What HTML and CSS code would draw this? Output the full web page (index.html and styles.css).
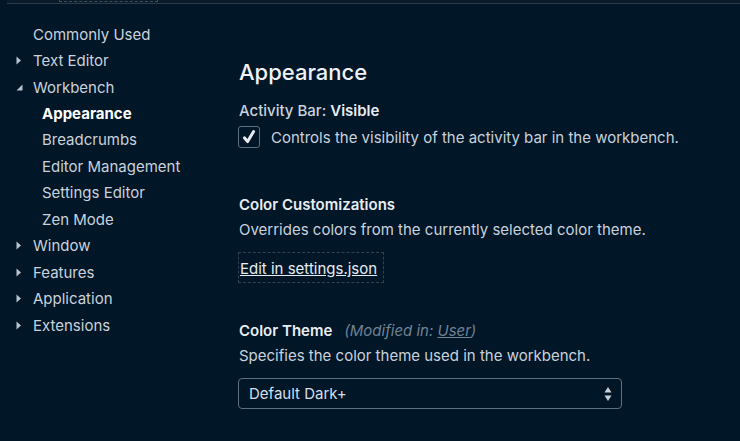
FILE: index.html
```html
<!DOCTYPE html>
<html lang="en">
<head>
<meta charset="utf-8">
<title>Settings</title>
<link rel="stylesheet" href="styles.css">
</head>
<body>
<div class="topbar"><div class="search-focus"></div></div>
<div class="main">
  <nav class="toc">
    <div class="row l1"><span class="twist"></span>Commonly Used</div>
    <div class="row l1"><span class="twist"><svg width="6" height="9" viewBox="0 0 6 9"><path d="M0.5 0.5 L5 4.5 L0.5 8.5 Z" fill="#b8c2cc"/></svg></span>Text Editor</div>
    <div class="row l1"><span class="twist"><svg width="7" height="7" viewBox="0 0 7 7"><path d="M6.5 0.5 L6.5 6.5 L0.5 6.5 Z" fill="#b8c2cc"/></svg></span>Workbench</div>
    <div class="row l2 active">Appearance</div>
    <div class="row l2">Breadcrumbs</div>
    <div class="row l2">Editor Management</div>
    <div class="row l2">Settings Editor</div>
    <div class="row l2">Zen Mode</div>
    <div class="row l1"><span class="twist"><svg width="6" height="9" viewBox="0 0 6 9"><path d="M0.5 0.5 L5 4.5 L0.5 8.5 Z" fill="#b8c2cc"/></svg></span>Window</div>
    <div class="row l1"><span class="twist"><svg width="6" height="9" viewBox="0 0 6 9"><path d="M0.5 0.5 L5 4.5 L0.5 8.5 Z" fill="#b8c2cc"/></svg></span>Features</div>
    <div class="row l1"><span class="twist"><svg width="6" height="9" viewBox="0 0 6 9"><path d="M0.5 0.5 L5 4.5 L0.5 8.5 Z" fill="#b8c2cc"/></svg></span>Application</div>
    <div class="row l1"><span class="twist"><svg width="6" height="9" viewBox="0 0 6 9"><path d="M0.5 0.5 L5 4.5 L0.5 8.5 Z" fill="#b8c2cc"/></svg></span>Extensions</div>
  </nav>
  <section class="content">
    <h1 class="group-title">Appearance</h1>

    <div class="setting first">
      <div class="title"><span class="cat">Activity Bar: </span><b>Visible</b></div>
      <div class="check-row">
        <span class="checkbox"><svg width="16" height="16" viewBox="0 0 16 16"><path d="M3.4 8.8 L6.6 12.6 L12.6 2.6" fill="none" stroke="#e6ebf2" stroke-width="3" stroke-linecap="round" stroke-linejoin="round"/></svg></span>
        <span class="desc">Controls the visibility of the activity bar in the workbench.</span>
      </div>
    </div>

    <div class="setting">
      <div class="title"><b>Color Customizations</b></div>
      <div class="desc line">Overrides colors from the currently selected color theme.</div>
      <div class="edit-link"><span>Edit in settings.json</span></div>
    </div>

    <div class="setting last">
      <div class="title"><b>Color Theme</b><span class="modified">(Modified in: <u>User</u>)</span></div>
      <div class="desc line">Specifies the color theme used in the workbench.</div>
      <div class="select">
        <span>Default Dark+</span>
        <svg class="arrows" width="8" height="16" viewBox="0 0 8 16"><path d="M4 1 L7.5 6.5 L0.5 6.5 Z" fill="#c8d0d8"/><path d="M4 15 L7.5 9.5 L0.5 9.5 Z" fill="#c8d0d8"/></svg>
      </div>
    </div>
  </section>
</div>
</body>
</html>
```
FILE: styles.css
```css
* { box-sizing: border-box; }
html, body { margin: 0; padding: 0; }
body {
  background: #011627;
  color: #d6deeb;
  font-family: Inter, "Noto Sans", sans-serif;
  font-size: 15px;
  width: 740px;
  height: 441px;
  overflow: hidden;
}
.topbar {
  height: 4px;
  margin-left: 7px;
  border-bottom: 1px solid #2a3c4b;
  background: #0a1b29;
  position: relative;
}
.search-focus {
  position: absolute;
  left: 52px;
  top: -3px;
  width: 99px;
  height: 5px;
  border: 1px dashed #3a5060;
  border-top: none;
}
.main {
  display: flex;
}
.toc {
  width: 239px;
  flex: none;
  padding-top: 17px;
}
.row {
  height: 26.45px;
  display: flex;
  align-items: center;
  color: #c9d2dc;
  white-space: nowrap;
}
.row.l1 { padding-left: 16px; }
.row.l2 { padding-left: 42px; }
.row.active { color: #ffffff; font-weight: 700; }
.twist {
  width: 17px;
  flex: none;
  display: flex;
  align-items: center;
}
.content {
  flex: 1;
  padding-top: 54px;
}
.group-title {
  margin: 0;
  font-size: 22px;
  font-weight: 500;
  line-height: 28px;
  color: #eef2f7;
}
.setting { padding-top: 47px; }
.setting.first { padding-top: 15px; }
.setting.last { padding-top: 38px; }
.title {
  line-height: 20px;
  height: 20px;
  white-space: nowrap;
}
.title b { font-weight: 600; color: #e8edf3; }
.cat { color: #c9d2dc; font-weight: 500; }
.modified {
  font-style: italic;
  color: #6f8394;
  margin-left: 12px;
}
.modified u { text-decoration-color: #6f8394; }
.check-row {
  margin-top: 5px;
  display: flex;
  align-items: center;
  height: 22px;
}
.checkbox {
  width: 22px;
  height: 22px;
  margin-left: -1px;
  border: 1px solid #5d6f80;
  border-radius: 3px;
  display: flex;
  align-items: center;
  justify-content: center;
  flex: none;
}
.check-row .desc { margin-left: 11px; }
.desc { color: #c9d2dc; white-space: nowrap; }
.desc.line { margin-top: 5px; line-height: 20px; }
.edit-link {
  margin-top: 12px;
  margin-left: -1px;
  width: 146px;
  height: 31px;
  border: 1px dashed #2f4353;
  display: flex;
  align-items: center;
  padding-left: 1px;
  padding-top: 2px;
}
.edit-link span {
  text-decoration: underline;
  color: #e8edf3;
}
.select {
  margin-top: 12px;
  margin-left: -1px;
  width: 384px;
  height: 31px;
  border: 1px solid #5d6f80;
  border-radius: 4px;
  display: flex;
  align-items: center;
  justify-content: space-between;
  padding: 0 10px 0 10px;
  color: #d6deeb;
}
.arrows { margin-right: -1px; }
```
